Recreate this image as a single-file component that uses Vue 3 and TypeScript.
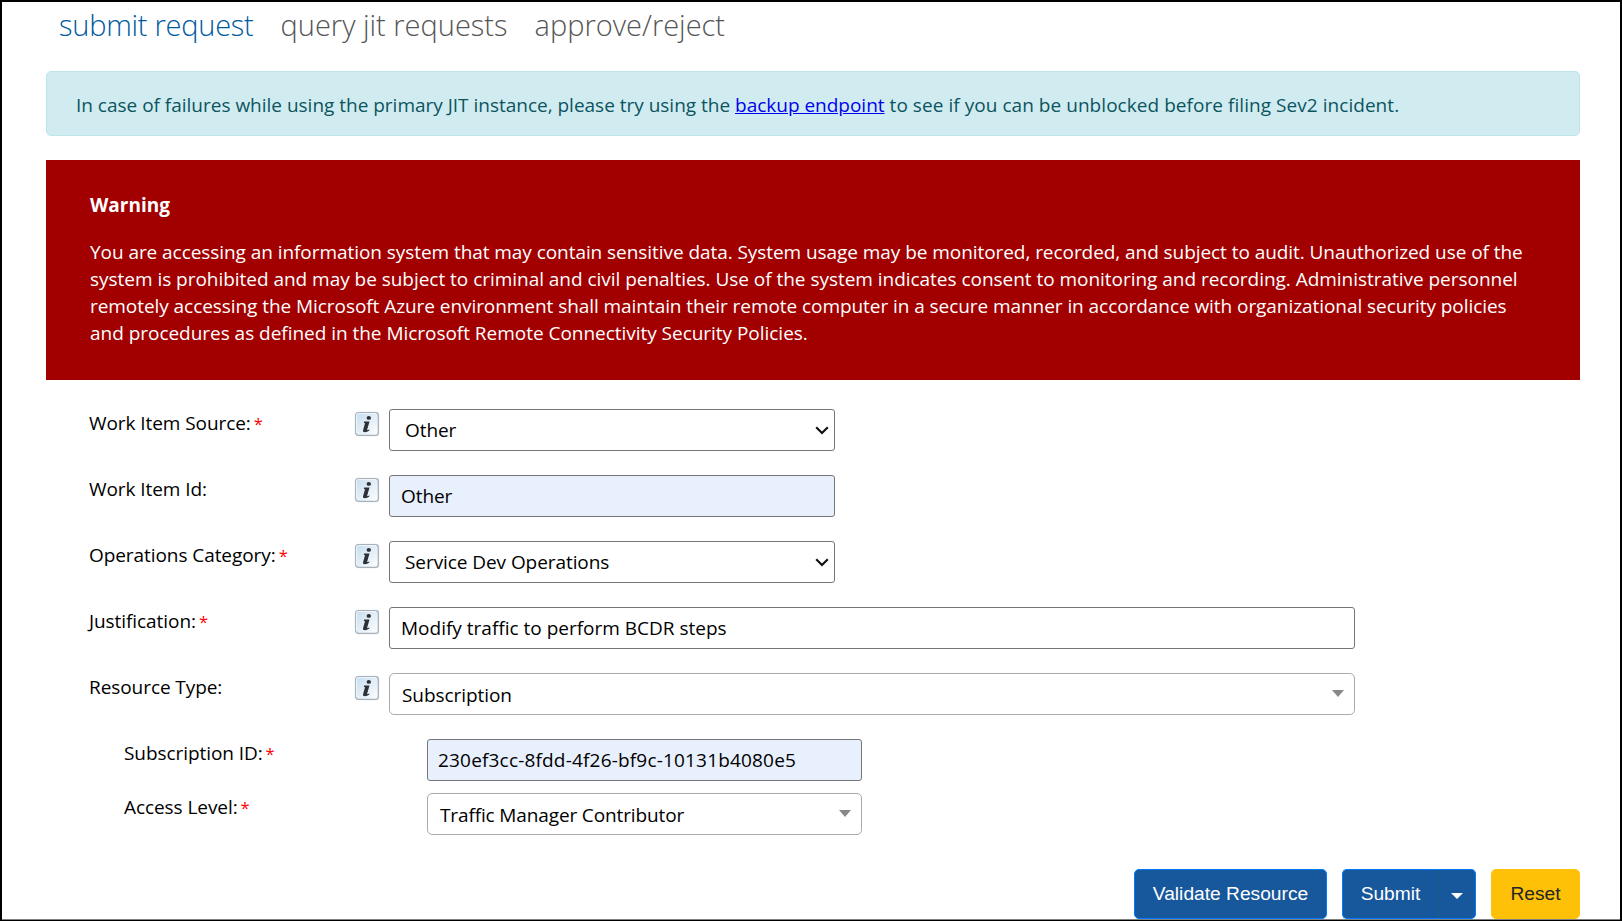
<script setup lang="ts">
import { ref } from 'vue'

type Kind = 'select' | 'text' | 'combo'

interface Field {
  id: string
  label: string
  required: boolean
  kind: Kind
  value: string
  wide?: boolean
  filled?: boolean
}

const tabs = [
  { id: 'submit', label: 'submit request' },
  { id: 'query', label: 'query jit requests' },
  { id: 'approve', label: 'approve/reject' },
]
const activeTab = ref('submit')

const fields = ref<Field[]>([
  { id: 'source', label: 'Work Item Source:', required: true, kind: 'select', value: 'Other' },
  { id: 'item', label: 'Work Item Id:', required: false, kind: 'text', value: 'Other', filled: true },
  { id: 'category', label: 'Operations Category:', required: true, kind: 'select', value: 'Service Dev Operations' },
  { id: 'reason', label: 'Justification:', required: true, kind: 'text', value: 'Modify traffic to perform BCDR steps', wide: true },
  { id: 'type', label: 'Resource Type:', required: false, kind: 'combo', value: 'Subscription', wide: true },
])

const subscriptionId = ref('230ef3cc-8fdd-4f26-bf9c-10131b4080e5')
</script>

<template>
  <div class="frame">
    <main class="page">
      <nav class="tabs">
        <button
          v-for="tab in tabs"
          :key="tab.id"
          type="button"
          :class="['tab', tab.id, { active: tab.id === activeTab }]"
          @click="activeTab = tab.id"
        >{{ tab.label }}</button>
      </nav>

      <div class="notice">
        In case of failures while using the primary JIT instance, please try using the
        <a href="#">backup endpoint</a>
        <span class="notice-end"> to see if you can be unblocked before filing Sev2 incident.</span>
      </div>

      <section class="warning">
        <h2>Warning</h2>
        <p>
          You are accessing an information system that may contain sensitive data. System usage may be monitored, recorded, and subject to audit. Unauthorized use of the<br />
          <span class="second">system is prohibited and may be subject to criminal and civil penalties. Use of the system indicates consent to monitoring and recording. Administrative personnel</span><br />
          remotely accessing the Microsoft Azure environment shall maintain their remote computer in a secure manner in accordance with organizational security policies<br />
          <span class="second">and procedures as defined in the Microsoft Remote Connectivity Security Policies.</span>
        </p>
      </section>

      <form class="form" @submit.prevent>
        <div v-for="field in fields" :key="field.id" class="row">
          <label :for="field.id">{{ field.label }}<b v-if="field.required">*</b></label>
          <svg class="info" viewBox="0 0 26 26" aria-hidden="true">
            <defs>
              <linearGradient :id="'shade-' + field.id" x1="0" y1="0" x2="1" y2="1">
                <stop offset="0" stop-color="#c3dcef" />
                <stop offset="0.5" stop-color="#e3eef7" />
                <stop offset="1" stop-color="#ffffff" />
              </linearGradient>
            </defs>
            <rect x="0.5" y="0.5" width="25" height="25" rx="4" fill="#eef4fa" />
            <rect x="1.7" y="1.7" width="22.6" height="22.6" rx="2.6" :fill="`url(#shade-${field.id})`" stroke="#a9b2bc" stroke-width="1.3" />
            <path d="M2.6 22V4.2q0-1.6 1.6-1.6H22" fill="none" stroke="#fff" stroke-width="1" opacity="0.8" />
            <ellipse cx="14.8" cy="6.9" rx="2.2" ry="1.9" fill="#2d3039" />
            <path d="M10.2 10.5h5.3l-2.3 8q-.2.9.6.6l1.7-.7-.2 1q-2.1 1.8-4.4 1.8-2.4 0-1.8-2.2l1.9-6.8-1.2-.5z" fill="#2d3039" />
          </svg>
          <input
            v-if="field.kind === 'text'"
            :id="field.id"
            v-model="field.value"
            type="text"
            :class="['control', field.id, { wide: field.wide, filled: field.filled }]"
          />
          <div v-else :class="['control', field.kind, { wide: field.wide }]">
            <span>{{ field.value }}</span>
            <svg v-if="field.kind === 'select'" class="chevron" viewBox="0 0 14 9">
              <path d="M1.2 1.2 7 7l5.8-5.8" fill="none" stroke="#101010" stroke-width="2.1" />
            </svg>
            <i v-else class="caret"></i>
          </div>
        </div>

        <div class="row nested">
          <label for="subscription">Subscription ID:<b>*</b></label>
          <input id="subscription" v-model="subscriptionId" type="text" class="control filled guid" />
        </div>
        <div class="row nested">
          <label>Access Level:<b>*</b></label>
          <div class="control combo access">
            <span>Traffic Manager Contributor</span>
            <i class="caret"></i>
          </div>
        </div>
      </form>

      <footer class="actions">
        <button type="button" class="btn validate">Validate Resource</button>
        <div class="split">
          <button type="button" class="btn submit">Submit</button>
          <button type="button" class="btn toggle" aria-label="More submit options"><i></i></button>
        </div>
        <button type="button" class="btn reset">Reset</button>
      </footer>
    </main>
  </div>
</template>

<style>
body {
  overflow: hidden;
  background: #fff;
}
</style>

<style scoped>
* {
  box-sizing: border-box;
}
.frame {
  height: 921px;
  border: 2px solid #000;
  border-bottom-width: 1px;
  background: #fff;
}
.page {
  height: 918px;
  padding: 3px 40px 0 44px;
  border-bottom: 1px solid #808080;
  overflow: hidden;
  font: 19px/27px 'Open Sans', 'Noto Sans', sans-serif;
  color: #000;
}
.tabs {
  display: flex;
  gap: 27px;
  height: 66px;
  padding-left: 13px;
}
.tab {
  height: 40px;
  padding: 0;
  border: 0;
  background: none;
  font: 300 29px/40px 'Open Sans', 'Noto Sans', sans-serif;
  color: #555;
  white-space: nowrap;
}
.tab.active {
  color: #005a9e;
}
.tab.submit {
  letter-spacing: -0.25px;
}
.notice {
  height: 65px;
  padding: 20px 29px 0;
  border: 1px solid #bee5eb;
  border-radius: 5px;
  background: #d1ecf1;
  color: #0c5460;
  letter-spacing: -0.01px;
  white-space: nowrap;
}
.notice a {
  color: #00e;
}
.notice-end {
  letter-spacing: 0.05px;
}
.warning {
  height: 220px;
  margin-top: 24px;
  padding: 32px 44px 0;
  background: #a20000;
  color: #fff;
}
.warning h2 {
  margin: 0 0 20px;
  font-size: 19px;
  font-weight: 700;
  line-height: 27px;
}
.warning p {
  margin: 0;
  letter-spacing: -0.06px;
  white-space: nowrap;
}
.warning .second {
  letter-spacing: -0.03px;
}
.form {
  display: flex;
  flex-direction: column;
  gap: 24px;
  margin-top: 29px;
  padding-left: 43px;
  letter-spacing: -0.07px;
}
.row {
  display: flex;
  align-items: flex-start;
  height: 42px;
}
.row label {
  width: 265px;
  padding-top: 1px;
  white-space: nowrap;
}
.row label b {
  margin-left: 3px;
  font-size: 16.5px;
  font-weight: 400;
  line-height: 1;
  color: #f00;
}
.info {
  width: 26px;
  height: 26px;
  margin: 2px 9px 0 0;
}
.control {
  width: 446px;
  height: 42px;
  padding: 0 11px;
  border: 1px solid #767676;
  border-radius: 3px;
  background: #fff;
  font: inherit;
  letter-spacing: inherit;
  color: #000;
  outline: 0;
}
.control.wide {
  width: 966px;
}
.control.filled {
  background: #e8effd;
}
.control.reason {
  letter-spacing: 0;
}
.select,
.combo {
  display: flex;
  align-items: center;
  justify-content: space-between;
}
.select {
  padding: 1px 5px 0 15px;
}
.combo {
  padding: 3px 10px 0 12px;
  border-color: #aaa;
  border-radius: 5px;
}
.chevron {
  width: 14px;
  height: 9px;
  margin-top: -1px;
}
.caret {
  margin-top: -4px;
  border: 6.25px solid transparent;
  border-top: 7px solid #888;
  border-bottom: 0;
}
.nested {
  padding-left: 35px;
}
.nested label {
  width: 303px;
}
.nested .control {
  width: 435px;
}
.nested + .nested {
  margin-top: -12px;
}
.nested .guid {
  padding-left: 10px;
  letter-spacing: 0.18px;
}
.nested .access {
  letter-spacing: -0.13px;
}
.actions {
  display: flex;
  justify-content: flex-end;
  gap: 15px;
  margin: 34px -1px 0 0;
  padding-right: 1px;
}
.btn {
  height: 50px;
  padding: 0;
  border: 1px solid #007bff;
  border-radius: 5px;
  background: #17579b;
  font: 19.2px/48px 'Liberation Sans', Arial, sans-serif;
  color: #fff;
}
.validate {
  width: 193px;
}
.split {
  display: flex;
}
.submit.btn {
  width: 97px;
  border-right: 1px solid #1b5c85;
  border-radius: 5px 0 0 5px;
}
.toggle {
  display: flex;
  align-items: center;
  justify-content: center;
  width: 37px;
  border-left: 0;
  border-radius: 0 5px 5px 0;
}
.toggle i {
  margin-top: 3px;
  border: 6px solid transparent;
  border-top-color: #fff;
  border-bottom: 0;
}
.reset {
  width: 89px;
  border-color: #ffc107;
  background: #ffc107;
  color: #212529;
}
</style>
